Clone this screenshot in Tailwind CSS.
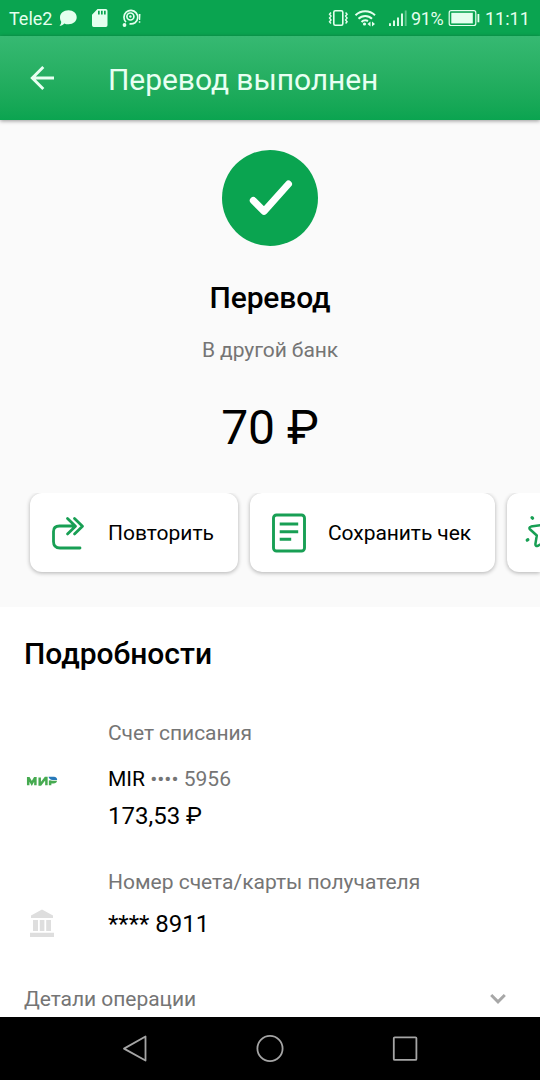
<!DOCTYPE html>
<html lang="ru">
<head>
<meta charset="utf-8">
<title>Перевод выполнен</title>
<script src="https://cdn.jsdelivr.net/npm/@tailwindcss/browser@4"></script>
</head>
<body class="flex h-[1080px] w-[540px] flex-col overflow-hidden bg-white font-['Roboto',sans-serif] text-black whitespace-nowrap">
  <div class="flex h-9 shrink-0 items-center justify-between bg-[#0aa450] pr-3 pl-[9px] text-[18px] leading-9 text-[#e4ffee]">
    <div class="flex h-9 items-center">
      <span class="w-[50px] pt-0.5">Tele2</span>
      <svg class="h-9 w-[90px]" viewBox="59 0 90 36" fill="currentColor">
        <path d="M68.500 10.300c4.800 0 8.200 3 8.200 7s-3.400 7-8.200 7c-1.500 0-3-.3-4.200-.9-1.300 1.600-3 2.400-4.800 2.400 1.200-1.200 1.700-2.400 1.700-4-.8-1.200-1.200-2.800-1.200-4.500 0-4 3.600-7 8.500-7z"/>
        <path fill-rule="evenodd" d="M97.500 9h8.300a1.700 1.700 0 0 1 1.700 1.700v14.600a1.700 1.700 0 0 1-1.700 1.700H93.700a1.700 1.700 0 0 1-1.700-1.700V14.700zM98 10.800v3.700h1.700v-3.700zM101 10.800v3.700h1.700v-3.700zM104 10.800v3.700h1.700v-3.700z"/>
        <g fill="none" stroke="currentColor" stroke-width="1.700"><path d="M126 22.200a6.900 6.900 0 1 1 9 .6c-1.500 1-3.500 1.300-5.500 1"/><circle cx="130.400" cy="16.500" r="3.500"/></g>
        <circle cx="130.400" cy="16.500" r="1.200"/><circle cx="124.500" cy="25" r="1.900"/>
        <path d="M138.700 14h1.800l-.3 6h-1.200zM138.800 21.200h1.500v1.500h-1.500z"/>
      </svg>
    </div>
    <div class="flex h-9 items-center">
      <svg class="h-9 w-[84px]" viewBox="327 0 84 36" fill="none" stroke="currentColor">
        <rect x="333.800" y="10.800" width="9" height="14.400" rx="1.500" stroke-width="1.600"/>
        <path stroke-width="1.400" d="M331 12.500l-1.500 1.800 1.500 1.800-1.500 1.900 1.500 1.900-1.500 1.800 1.500 1.800M345.600 12.500l1.500 1.800-1.500 1.800 1.500 1.900-1.500 1.900 1.500 1.800-1.500 1.800"/>
        <path stroke-width="2" d="M355.500 15.200a14 14 0 0 1 19.500 0M358.500 18.700a9.500 9.500 0 0 1 13.500 0M361.500 22a5.500 5.500 0 0 1 6.500-1"/>
        <circle cx="364.500" cy="24" r="1.600" fill="currentColor" stroke="none"/>
        <path fill="currentColor" stroke="none" d="M367.500 24l3-2.500v5zM375 24l-3-2.500v5z"/>
        <path stroke-width="1.900" d="M390 23.200v2.800M394 20.500V26M398 17.500V26M402 13.500V26"/><path stroke-width="1.900" opacity=".4" d="M405.700 10.500V26"/>
      </svg>
      <span class="w-[37px] pt-0.5 tracking-[-0.02em]">91%</span>
      <svg class="h-9 w-[37px]" viewBox="448 0 37 36" fill="none" stroke="currentColor">
        <rect x="449.200" y="10.700" width="26.600" height="14.800" rx="2" stroke-width="1.200"/>
        <rect x="451.300" y="12.800" width="21.500" height="10.600" fill="currentColor" stroke="none"/>
        <path d="M478.400 14v8.300" stroke-width="1.800"/>
      </svg>
      <span class="w-[43px] pt-0.5">11:11</span>
    </div>
  </div>
  <header class="z-10 flex h-[84px] shrink-0 items-center bg-linear-to-b from-[#36b972] to-[#0aa450] pl-[28px] shadow-[0_1px_4px_rgba(0,0,0,0.4)]">
    <svg class="h-7 w-7" viewBox="0 0 28 28" fill="none" stroke="#e8fff2" stroke-width="2.900"><path d="M26 14H4.500M15.300 3L4.300 14l11 11"/></svg>
    <h1 class="ml-[52px] pt-[3px] text-[30px] leading-9 tracking-[-0.002em] text-[#e8fff2]">Перевод выполнен</h1>
  </header>
  <section class="flex h-[487px] w-[540px] shrink-0 flex-col items-center overflow-hidden bg-[#fafafa] pt-[30px]">
    <div class="flex h-24 w-24 items-center justify-center rounded-full bg-[#0aa450]">
      <svg class="h-24 w-24" viewBox="0 0 96 96" fill="none" stroke="#fff" stroke-width="7" stroke-linecap="round" stroke-linejoin="round"><path d="M31.300 50.500L42 61.300L66.500 34"/></svg>
    </div>
    <h2 class="mt-[34px] text-[30px] leading-9 font-medium tracking-[-0.005em]">Перевод</h2>
    <p class="mt-[22px] text-[21px] leading-6 tracking-[-0.003em] text-[#757575]">В другой банк</p>
    <p class="mt-[38px] text-[48px] leading-[56px]">70 ₽</p>
    <div class="mt-[37px] flex h-[90px] w-full gap-3 overflow-hidden pl-[30px] text-[21px] -mb-3">
      <div class="flex h-[79px] w-[208px] shrink-0 items-center rounded-xl bg-white pl-[21px] shadow-[0_1px_4px_rgba(0,0,0,0.3)]">
        <svg class="h-9 w-9" viewBox="0 0 36 36" fill="none" stroke="#189f54" stroke-width="2.800" stroke-linecap="round" stroke-linejoin="round"><path d="M24 11H8.500C4.500 11 2.500 13 2.500 16.500v10C2.500 31 4.500 33 9 33h20M16.500 3.500l8 7.700-8 7.700M23.500 3.500l8 7.700-8 7.700"/></svg>
        <span class="ml-[21px] pt-0.5">Повторить</span>
      </div>
      <div class="flex h-[79px] w-[245px] shrink-0 items-center rounded-xl bg-white pl-[21px] shadow-[0_1px_4px_rgba(0,0,0,0.3)]">
        <svg class="h-10 w-9" viewBox="0 0 36 40" fill="none" stroke="#189f54" stroke-width="2.900"><rect x="2.500" y="2" width="31" height="36" rx="3"/><path d="M8.700 11h18.500M8.700 18.700h18.500M8.700 26.200h11.500"/></svg>
        <span class="ml-[21px] pt-0.5 tracking-[-0.003em]">Сохранить чек</span>
      </div>
      <div class="flex h-[79px] w-[33px] shrink-0 items-center overflow-hidden rounded-l-xl bg-white pl-[18px] shadow-[0_1px_4px_rgba(0,0,0,0.3)]">
        <svg class="h-10 w-[15px] shrink-0" viewBox="0 0 15 40" fill="none" stroke="#189f54" stroke-width="2.500" stroke-linecap="round" stroke-linejoin="round"><path d="M18 11.800L6 13.600c-1.800.4-2 1.900-.8 2.900l6.600 6-1.400 8.500c-.1 1.700.9 2.500 2.400 1.900L18 30"/><path d="M7 4.600l.6.600M2.200 27.100l.7-.4" stroke-width="3.200"/></svg>
      </div>
    </div>
  </section>
  <main class="flex h-[410px] shrink-0 flex-col overflow-hidden bg-white pt-[29px] text-[21px]">
    <h2 class="pl-6 text-[30px] leading-9 font-medium">Подробности</h2>
    <div class="mt-[49px] flex pl-[24px]">
      <svg class="mt-[49px] h-6 w-[84px]" viewBox="24 770 84 24">
        <g fill="none" stroke="#46aa50" stroke-width="2.500"><path d="M28.200 785.200v-7h.6l3 5.200 3-5.200h.6v7M39.700 777.500v7h.8l5-6.500h.9v7.200M50.100 780.500v4.700"/></g>
        <path fill="#2779b9" d="M48.500 776.800h5.500c2 0 3.200 1.300 3.200 3.200h-4.500c-2.300 0-3.800-1.300-4.200-3.200z"/>
        <path fill="#46aa50" d="M49 780.700h8c-.3 1.800-1.500 2.800-3.500 2.800H49z"/>
      </svg>
      <div class="flex flex-col">
        <p class="leading-6 tracking-[-0.003em] text-[#757575]">Счет списания</p>
        <p class="mt-[22px] leading-6">MIR <span class="text-[#757575]">•••• 5956</span></p>
        <p class="mt-[13px] text-[24px] leading-6">173,53 ₽</p>
      </div>
    </div>
    <div class="mt-[42px] flex pl-[24px]">
      <svg class="mt-[35px] h-9 w-[84px]" viewBox="24 905 84 36" fill="#dedede"><path d="M42 909.500l11 6v2.500H31v-2.500zM33 920h5v11h-5zM39.800 920h4.600v11h-4.600zM46.200 920h4.800v11h-4.800zM30 932.700h24v4.300H30z"/></svg>
      <div class="flex flex-col">
        <p class="leading-6 text-[#757575]">Номер счета/карты получателя</p>
        <p class="mt-[16px] text-[24px] leading-7">**** 8911</p>
      </div>
    </div>
    <div class="mt-[46px] flex items-center justify-between pr-[34px] pl-6 leading-6 text-[#757575]">
      <span class="tracking-[-0.002em]">Детали операции</span>
      <svg class="h-4 w-4" viewBox="0 0 16 16" fill="none" stroke="#a7a7a7" stroke-width="3"><path d="M1.200 4L8 10.800 14.800 4"/></svg>
    </div>
  </main>
  <nav class="h-[63px] shrink-0 bg-black">
    <svg class="h-[63px] w-[540px]" viewBox="0 1017 540 63" fill="none" stroke="#a5a5a5" stroke-width="1.800" stroke-linejoin="round"><path d="M145.500 1036.500v24L124 1048.600z"/><circle cx="270" cy="1048.500" r="12.600"/><rect x="393.800" y="1037.300" width="22.600" height="22.600" rx="1"/></svg>
  </nav>
</body>
</html>
